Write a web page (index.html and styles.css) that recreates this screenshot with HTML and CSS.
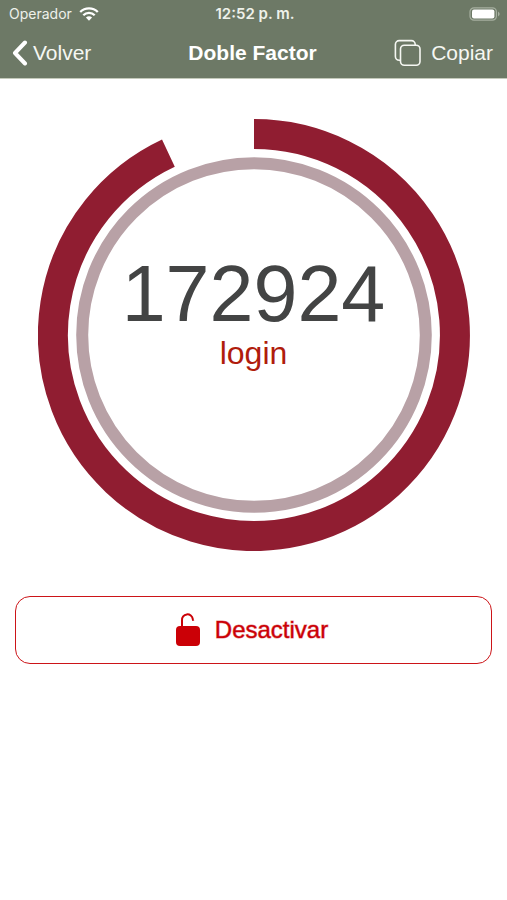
FILE: index.html
```html
<!DOCTYPE html>
<html lang="es">
<head>
    <meta charset="UTF-8">
    <meta name="viewport" content="width=device-width, initial-scale=1">
    <title>Doble Factor</title>
    <link rel="stylesheet" href="styles.css">
</head>
<body>
<header class="header">
    <div class="status">
        <div class="carrier">
            <span>Operador</span>
            <svg class="wifi" viewBox="0 0 20 14" aria-hidden="true">
                <path d="M1.2 5a12.4 12.4 0 0 1 17.6 0M4.3 8.2a8 8 0 0 1 11.4 0" fill="none" stroke="currentColor" stroke-width="2.3"/>
                <path d="M6.9 10.6a4.6 4.6 0 0 1 6.2 0L10 13.8z" fill="currentColor"/>
            </svg>
        </div>
        <time class="clock">12:52 p. m.</time>
        <svg class="battery" viewBox="0 0 32 14" aria-hidden="true">
            <rect x="1" y="0.8" width="26.4" height="12.4" rx="4" fill="none" stroke="#a6afa0" stroke-width="1.2"/>
            <rect x="3" y="2.6" width="22.4" height="8.8" rx="2" fill="#fff"/>
            <path d="M29 4.6q3.4 2.4 0 4.8z" fill="#a6afa0"/>
        </svg>
    </div>
    <nav class="nav">
        <a class="back" href="#">
            <svg class="chevron" viewBox="0 0 16 26" aria-hidden="true">
                <path d="M13 2.5L3 13l10 10.5" fill="none" stroke="currentColor" stroke-width="4" stroke-linecap="round" stroke-linejoin="round"/>
            </svg>
            <span>Volver</span>
        </a>
        <h1 class="title">Doble Factor</h1>
        <button class="copy" type="button">
            <svg class="copy-icon" viewBox="0 0 28 28" aria-hidden="true">
                <g fill="none" stroke="currentColor" stroke-width="1.6">
                    <path d="M6.5 21.3H5.2a3.8 3.8 0 0 1-3.8-3.8V5.4a3.8 3.8 0 0 1 3.8-3.8h12.2a3.8 3.8 0 0 1 3.8 3.8v.8"/>
                    <rect x="6.5" y="6.2" width="19.5" height="20" rx="3.8"/>
                </g>
            </svg>
            <span>Copiar</span>
        </button>
    </nav>
</header>
<main class="content">
    <section class="dial">
        <!-- anillo exterior: tiempo restante del código -->
        <svg class="ring" viewBox="0 0 432 432" aria-hidden="true">
            <path d="M216 15A201 201 0 1 1 130.4 34.1" fill="none" stroke="#901d31" stroke-width="30"/>
            <circle cx="216" cy="216" r="171.8" fill="none" stroke="#b8a1a6" stroke-width="12"/>
        </svg>
        <div class="token">
            <output class="code">172924</output>
            <span class="label">login</span>
        </div>
    </section>
    <button class="disable" type="button">
        <svg class="lock" viewBox="0 0 26 34" aria-hidden="true">
            <path d="M7 14V7.4a5.2 5.2 0 0 1 10.8-1.2l.5 1.6" fill="none" stroke="currentColor" stroke-width="2"/>
            <rect x="1" y="13" width="24" height="20" rx="4" fill="currentColor"/>
        </svg>
        <span>Desactivar</span>
    </button>
</main>
</body>
</html>
```
FILE: styles.css
```css
*{
    margin: 0;
    padding: 0;
    box-sizing: border-box;
}
body{
    background: #fff;
    font-family: "Liberation Sans", Arial, sans-serif;
}
.header{
    background: #6d7966;
    border-bottom: solid 1px #c4cabb;
    color: #fff;
}
.status{
    display: grid;
    grid-template-columns: 1fr auto 1fr;
    align-items: center;
    height: 27px;
    padding: 0 6px 0 9px;
    font-family: Inter, sans-serif;
    font-size: 14px;
    color: #eef1ea;
}
.carrier{
    display: flex;
    align-items: center;
    gap: 7px;
}
.wifi{
    width: 20px;
    height: 14px;
    color: #fff;
}
.clock{
    font-size: 15px;
    font-weight: 600;
}
.battery{
    width: 32px;
    height: 14px;
    justify-self: end;
}
.nav{
    display: grid;
    grid-template-columns: 1fr auto 1fr;
    align-items: center;
    height: 51px;
    padding: 0 14px 0 12px;
    font-size: 21px;
}
.back,
.copy{
    display: flex;
    align-items: center;
    color: #f5f7f2;
    font: inherit;
    text-decoration: none;
}
.back{
    gap: 5px;
}
.chevron{
    width: 16px;
    height: 26px;
    color: #fff;
}
.title{
    font-size: 21px;
}
.copy{
    justify-self: end;
    gap: 9px;
    background: none;
    border: none;
    cursor: pointer;
}
.copy-icon{
    width: 28px;
    height: 28px;
}
.content{
    padding: 40px 15px;
}
.dial{
    display: grid;
    width: 91%;
    max-width: 432px;
    margin: 0 auto;
}
.ring,
.token{
    grid-area: 1 / 1;
}
.ring{
    display: block;
    width: 100%;
}
.token{
    display: flex;
    flex-direction: column;
    align-items: center;
    align-self: center;
    padding-bottom: 44px;
}
.code{
    font-size: 79px;
    line-height: 80px;
    color: #434444;
}
.label{
    font-size: 32px;
    line-height: 38px;
    color: #b01c0c;
}
.disable{
    display: flex;
    align-items: center;
    justify-content: center;
    gap: 14px;
    width: 100%;
    height: 68px;
    margin-top: 45px;
    padding-right: 4px;
    background: #fff;
    border: solid 1px #cc1418;
    border-radius: 15px;
    color: #cb0006;
    font-family: inherit;
    font-size: 24px;
    cursor: pointer;
}
.disable span{
    -webkit-text-stroke: 1px rgba(203, 0, 6, 0.5);
}
.lock{
    width: 26px;
    height: 34px;
}
```
